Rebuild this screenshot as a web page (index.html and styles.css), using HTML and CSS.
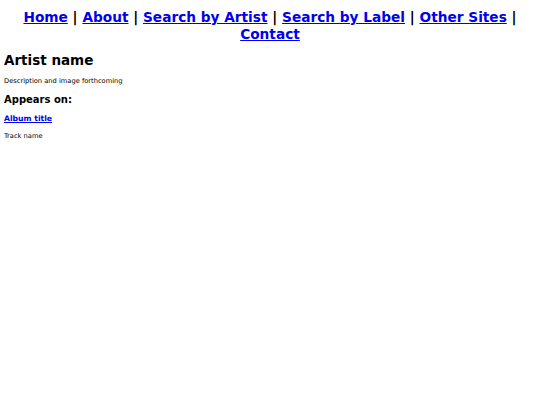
FILE: index.html
```html
<!DOCTYPE html>
<html lang="en">
<head>
    <meta charset="UTF-8">
    <title>Artist name</title>
    <link rel="stylesheet" href="styles.css">
</head>
<body>

    <div class="menu">
        <a href="#">Home</a> | <a href="#">About</a> | <a href="#">Search by Artist</a> | <a href="#">Search by Label</a> | <a href="#">Other Sites</a> | <a href="#">Contact</a>
    </div>

    <h1>Artist name</h1>
    <p>Description and image forthcoming</p>

    <h2>Appears on:</h2>
    <h3><a href="#">Album title</a></h3>
    <p>Track name</p>

</body>
</html>
```

FILE: styles.css
```css
body {
    font-family: "DejaVu Sans", Verdana, sans-serif;
    font-size: 6.7px;
    margin: 4px;
    color: #000000;
}

.menu {
    text-align: center;
    font-size: 13.7px;
    line-height: 17px;
    font-weight: bold;
    padding-top: 5px;
}

a {
    color: #0000ee;
}

h1 {
    font-size: 13.5px;
    margin: 9px 0 9px 0;
}

h2 {
    font-size: 10px;
    margin: 9px 0 9px 0;
}

h3 {
    font-size: 7.7px;
    margin: 9px 0 9px 0;
}

p {
    margin: 9px 0;
}
```
